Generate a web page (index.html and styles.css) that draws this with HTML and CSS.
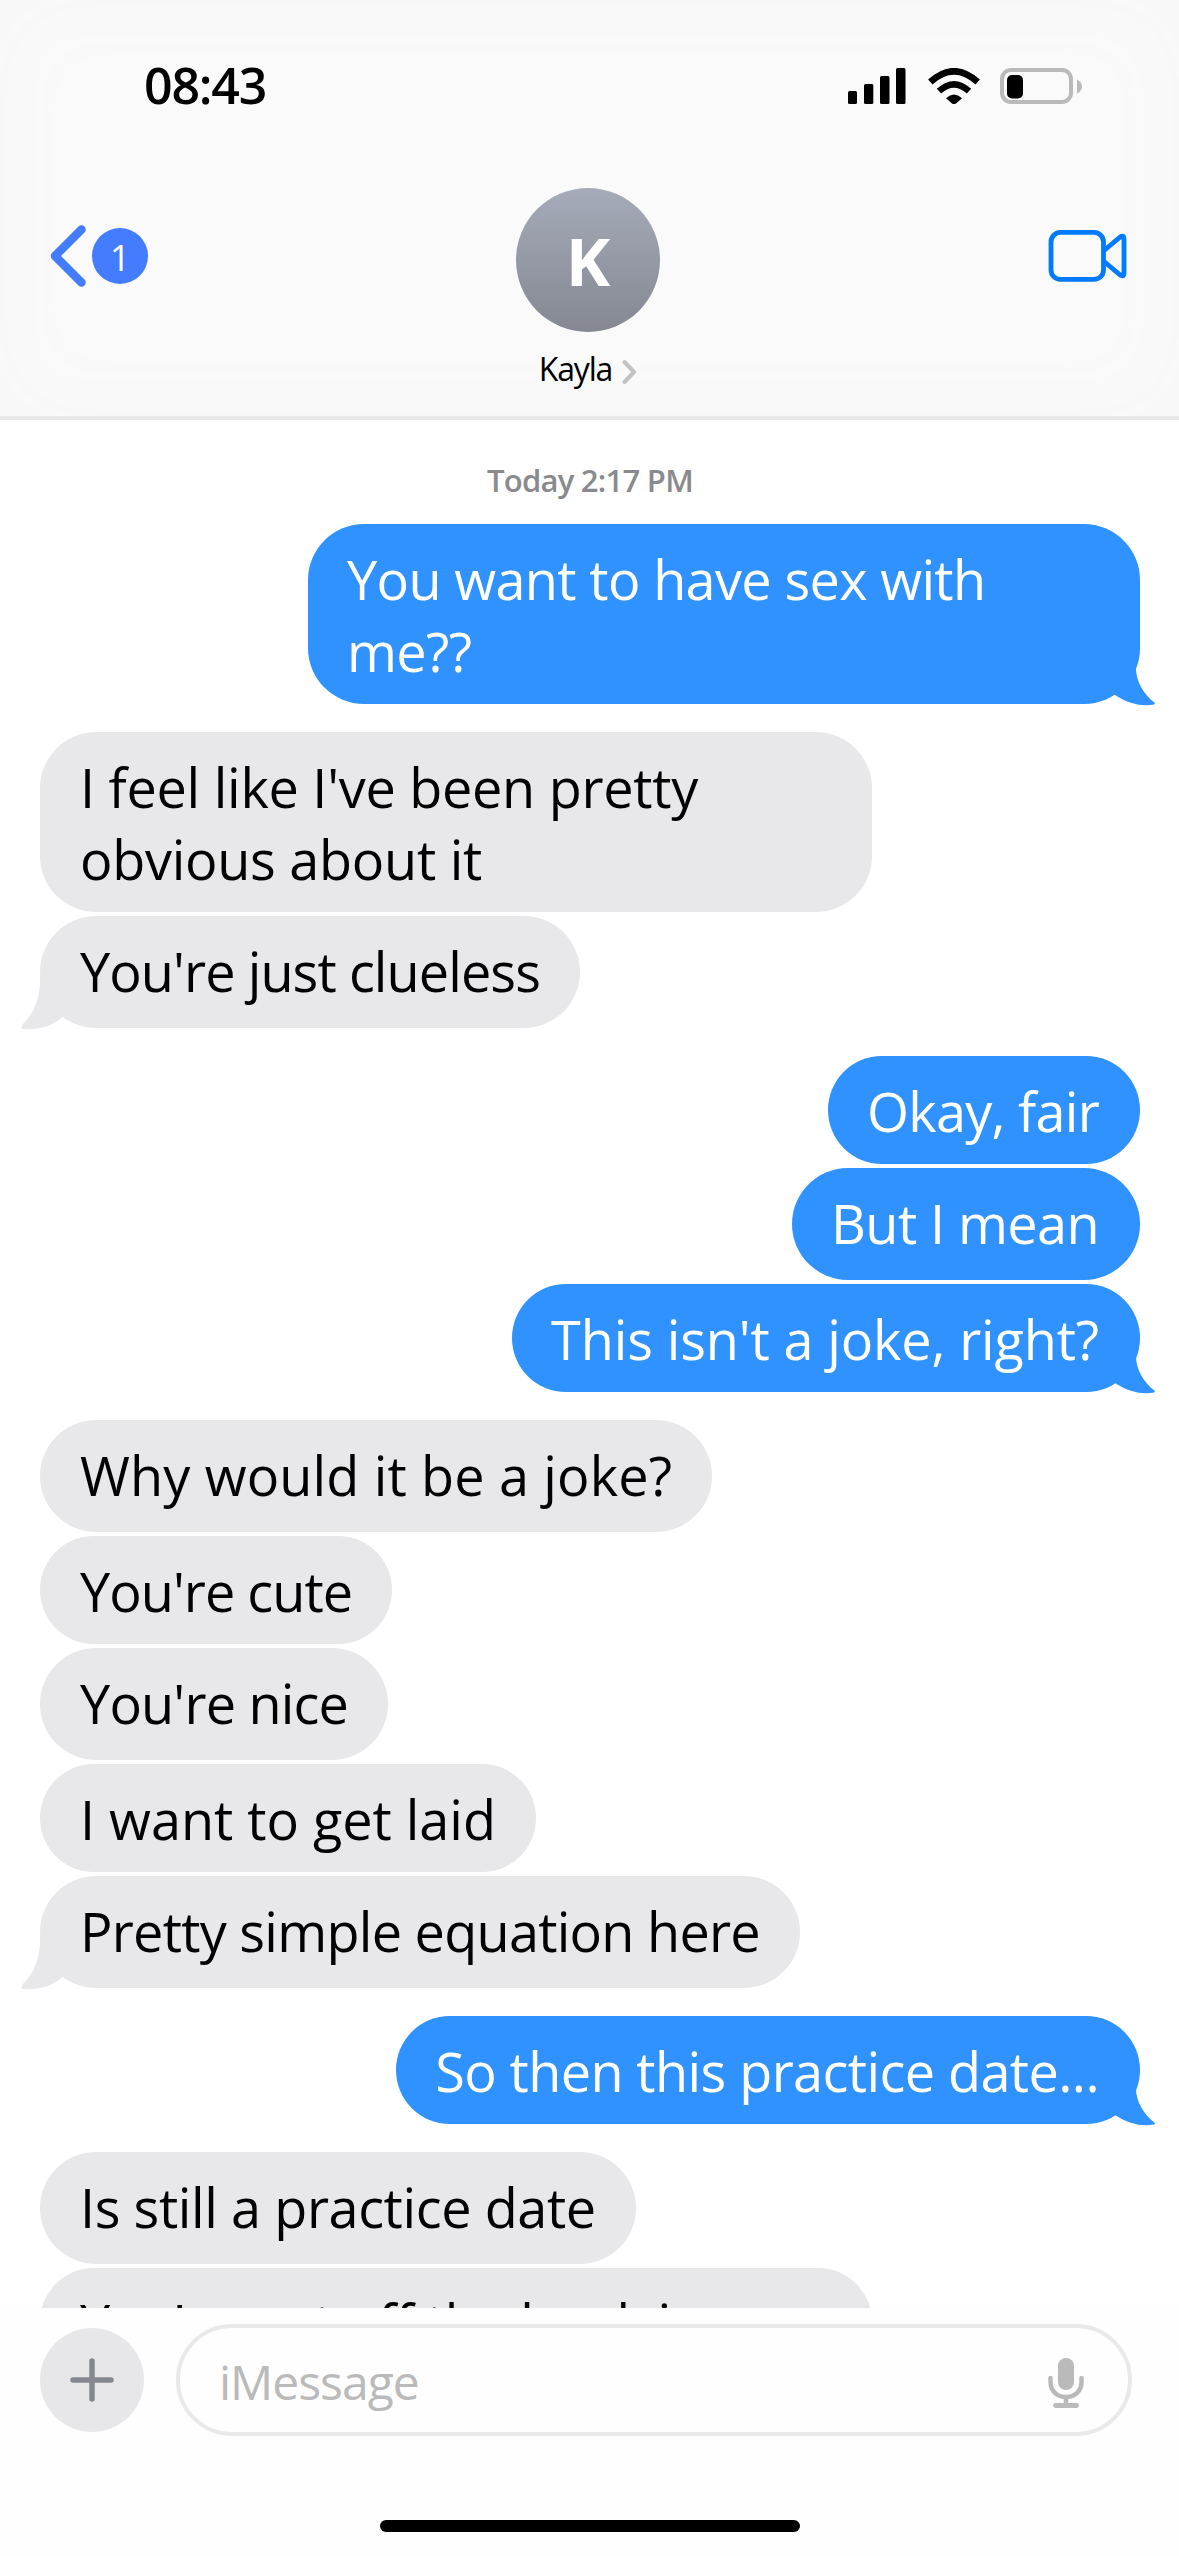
FILE: index.html
```html
<!DOCTYPE html>
<html lang="en">
<head>
<meta charset="utf-8">
<title>Messages</title>
<link rel="stylesheet" href="styles.css">
</head>
<body>
<svg width="0" height="0" class="defs" aria-hidden="true">
  <symbol id="tail-out" viewBox="-30 -36 50 40"><path d="M-4-35C-4-23 4-9 14.500-1.500Q15.500.3 14 .6C2 2.500-12 0-25.300-9.300L-30-35Z"/></symbol>
  <symbol id="tail-in" viewBox="-22 -52 62 56"><path d="M0-51C1-34-5-15-17-4Q-20.500.5-17 .9C-3 2.500 12-1.500 23-11.300L40-51Z"/></symbol>
</svg>
<div class="phone">
  <header class="header">
    <div class="status">
      <time class="clock">08:43</time>
      <svg class="indicators" viewBox="848 68 236 36" width="236" height="36">
        <rect x="848" y="91" width="9" height="13" rx="1.500"/>
        <rect x="864" y="84" width="9.300" height="20" rx="1.500"/>
        <rect x="880" y="76" width="9.500" height="28" rx="1.500"/>
        <rect x="896" y="68" width="9.500" height="36" rx="1.500"/>
        <g fill="none" stroke="#000">
          <path d="M930.300 82Q954 60.500 977.700 82" stroke-width="6.500"/>
          <path d="M939 91.200Q954 77.500 969 91.200" stroke-width="6.500"/>
        </g>
        <path d="M946 98.200Q954 91 962 98.200L956 103.600Q954 104.600 952 103.600Z"/>
        <rect x="1002" y="70" width="69" height="32" rx="9" fill="none" stroke="#bababa" stroke-width="4"/>
        <rect x="1007" y="75" width="16" height="23.500" rx="5"/>
        <path d="M1077 79.500Q1082 82 1082 86.500T1077 93.500Z" fill="#bababa"/>
      </svg>
    </div>
    <div class="nav">
      <div class="back">
        <svg width="36" height="64" viewBox="0 0 36 64"><path d="M31.500 5.500L5 32L31.500 58.500" fill="none" stroke="#447cff" stroke-width="8.500" stroke-linecap="round" stroke-linejoin="round"/></svg>
        <span class="unread">1</span>
      </div>
      <div class="contact">
        <div class="avatar">K</div>
        <div class="name"><span>Kayla</span>
          <svg width="15" height="26" viewBox="0 0 15 26"><path d="M2.500 3L12 13L2.500 23" fill="none" stroke="#c2c2c2" stroke-width="4" stroke-linecap="round" stroke-linejoin="round"/></svg>
        </div>
      </div>
      <svg class="video" width="79" height="54" viewBox="0 0 79 54" fill="none" stroke="#007aff" stroke-width="4.800" stroke-linejoin="round">
        <rect x="3" y="3.400" width="52.500" height="47" rx="9.500"/>
        <path d="M56 21.500L72 8.200Q76 5.500 76 10V44Q76 48.500 72 45.800L56 32.500"/>
      </svg>
    </div>
  </header>

  <main class="chat">
    <div class="date">Today 2:17 PM</div>
    <section class="group out">
      <p class="bubble wide fit-a">You want to have sex with me??<svg class="tail"><use href="#tail-out"/></svg></p>
    </section>
    <section class="group in">
      <p class="bubble wide fit-b">I feel like I've been pretty obvious about it</p>
      <p class="bubble tall fit-c">You're just clueless<svg class="tail"><use href="#tail-in"/></svg></p>
    </section>
    <section class="group out">
      <p class="bubble fit-d">Okay, fair</p>
      <p class="bubble tall fit-e">But I mean</p>
      <p class="bubble fit-f">This isn't a joke, right?<svg class="tail"><use href="#tail-out"/></svg></p>
    </section>
    <section class="group in">
      <p class="bubble tall fit-g">Why would it be a joke?</p>
      <p class="bubble fit-h">You're cute</p>
      <p class="bubble tall fit-i">You're nice</p>
      <p class="bubble fit-j">I want to get laid</p>
      <p class="bubble tall fit-d">Pretty simple equation here<svg class="tail"><use href="#tail-in"/></svg></p>
    </section>
    <section class="group out">
      <p class="bubble fit-e">So then this practice date...<svg class="tail"><use href="#tail-out"/></svg></p>
    </section>
    <section class="group in">
      <p class="bubble tall fit-k">Is still a practice date</p>
      <p class="bubble wide fit-a">You're not off the hook in</p>
    </section>
  </main>

  <footer class="composer">
    <div class="bar">
      <div class="add"><svg width="44" height="44" viewBox="0 0 44 44"><path d="M22 3V41M3 22H41" stroke="#85888e" stroke-width="5.500" stroke-linecap="round"/></svg></div>
      <div class="field">
        <span>iMessage</span>
        <svg width="36" height="52" viewBox="0 0 36 52" fill="none" stroke="#bababa">
          <rect x="10" y="2" width="16" height="32" rx="8" fill="#bababa" stroke="none"/>
          <path d="M2.500 22V26C2.500 35 9 41 18 41S33.500 35 33.500 26V22" stroke-width="4.500" stroke-linecap="round"/>
          <path d="M18 41V49" stroke-width="4.500"/>
          <path d="M7.500 49.500H28.500" stroke-width="4.800" stroke-linecap="round"/>
        </svg>
      </div>
    </div>
    <div class="home"></div>
  </footer>
</div>
</body>
</html>
```
FILE: styles.css
```css
* { box-sizing: border-box; }
body { margin: 0; background: #fff; font-family: "Open Sans", "Noto Sans", sans-serif; color: #000; }
.defs { position: absolute; }
.phone { width: 1179px; height: 2556px; display: flex; flex-direction: column; overflow: hidden; }

.header {
  flex: none;
  height: 420px;
  border-bottom: 4px solid #e8e8ea;
  background: #fafafa;
  box-shadow: inset 0 0 90px #f7f7f7;
}
.status {
  height: 188px;
  padding: 68px 95px 0 144px;
  display: flex;
  justify-content: space-between;
  align-items: flex-start;
}
.clock { font-size: 50px; font-weight: 600; line-height: 35px; letter-spacing: -1.200px; }
.indicators { display: block; }
.nav { display: grid; grid-template-columns: 1fr auto 1fr; align-items: start; padding: 0 52px 0 49px; }
.back { display: flex; align-items: center; gap: 6px; padding: 36px 0 0 1px; }
.unread {
  width: 56px;
  height: 56px;
  border-radius: 50%;
  background: #447cff;
  color: #fff;
  font-size: 36px;
  line-height: 60px;
  text-align: center;
}
.contact { display: flex; flex-direction: column; align-items: center; }
.avatar {
  width: 144px;
  height: 144px;
  border-radius: 50%;
  background: linear-gradient(#a5abb9, #858892);
  color: #fff;
  font-size: 67px;
  font-weight: 700;
  line-height: 145px;
  text-align: center;
}
.name {
  display: flex;
  align-items: center;
  gap: 10px;
  height: 44px;
  margin-top: 15px;
  font-size: 32px;
  line-height: 44px;
  letter-spacing: -1.200px;
}
.name svg { margin-top: 5px; }
.video { justify-self: end; margin-top: 41px; }

.chat { flex: none; height: 1888px; overflow: hidden; display: flex; flex-direction: column; gap: 28px; padding: 36px 39px 0 40px; }
.date {
  flex: none;
  height: 68px;
  margin-bottom: -28px;
  font-size: 31px;
  font-weight: 600;
  line-height: 48px;
  letter-spacing: -0.750px;
  text-align: center;
  color: #8a8a8e;
}
.group { flex: none; display: flex; flex-direction: column; gap: 4px; align-items: flex-start; }
.group.out { align-items: flex-end; }
.bubble {
  position: relative;
  min-height: 108px;
  margin: 0;
  padding: 19px 40px 17px;
  border-radius: 56px;
  font-size: 54px;
  line-height: 72px;
  white-space: nowrap;
  background: #e8e8ea;
}
.out .bubble { background: #2f92ff; color: #fff; padding-left: 39px; padding-right: 41px; }
.tall { height: 112px; }
.wide { width: 832px; white-space: normal; }
.tail { position: absolute; }
.out .tail { right: -20px; bottom: -4px; width: 50px; height: 40px; fill: #2f92ff; }
.in .tail { left: -22px; bottom: -4px; width: 62px; height: 56px; fill: #e8e8ea; z-index: -1; }

/* Tracking per message */
.fit-a { letter-spacing: -0.640px; }
.fit-b { letter-spacing: -0.270px; }
.fit-c { letter-spacing: -0.910px; }
.fit-d { letter-spacing: -0.730px; }
.fit-e { letter-spacing: -0.590px; }
.fit-f { letter-spacing: -0.140px; }
.fit-g { letter-spacing: 0.150px; }
.fit-h { letter-spacing: -0.960px; }
.fit-i { letter-spacing: -0.810px; }
.fit-j { letter-spacing: -0.020px; }
.fit-k { letter-spacing: -0.410px; }

.composer { flex: 1; background: #fefefe; padding-top: 16px; display: flex; flex-direction: column; align-items: center; }
.bar { width: 100%; display: flex; align-items: center; gap: 32px; padding: 0 47px 0 40px; }
.add {
  width: 104px;
  height: 104px;
  border-radius: 50%;
  background: #e7e7e9;
  display: flex;
  align-items: center;
  justify-content: center;
}
.field {
  flex: 1;
  height: 112px;
  border: 4px solid #e9e9e9;
  border-radius: 56px;
  padding: 4px 44px 0 39px;
  display: flex;
  align-items: center;
  justify-content: space-between;
  font-size: 48px;
  line-height: 66px;
  letter-spacing: -1px;
  color: #bababa;
}
.home { width: 420px; height: 12px; border-radius: 6px; background: #000; margin-top: 84px; }
```
